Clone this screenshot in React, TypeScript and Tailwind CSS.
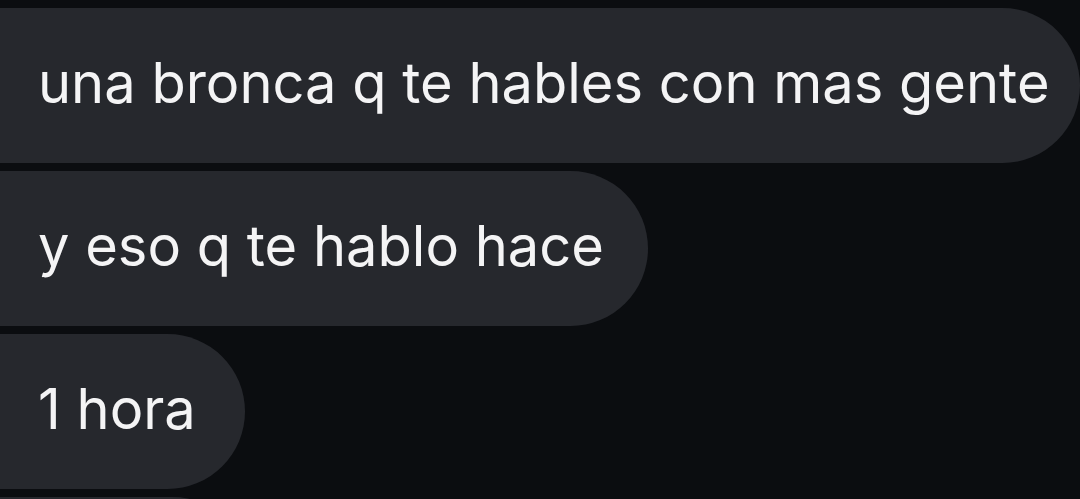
const messages = [
  { text: "una bronca q te hables con mas gente", width: "w-[1080px]", corners: "rounded-tl-[52px] rounded-bl-[8px] rounded-r-full" },
  { text: "y eso q te hablo hace", width: "w-[648px]", corners: "rounded-l-[8px] rounded-r-full" },
  { text: "1 hora", width: "w-[245px]", corners: "rounded-l-[8px] rounded-r-full" },
];

const App = () => {
  return (
    <div
      className="w-[1080px] h-[499px] overflow-hidden bg-[#0b0d10] flex flex-col gap-2 pt-2"
      style={{ fontFamily: "Inter, 'Noto Sans', sans-serif" }}
    >
      {messages.map((m) => (
        <div
          key={m.text}
          className={`${m.width} ${m.corners} shrink-0 h-[155px] bg-[#26282d] flex items-center pl-[38px] pb-[6px]`}
        >
          <span className="text-[56px] text-[#f4f4f5] whitespace-nowrap leading-none">{m.text}</span>
        </div>
      ))}
      {/* siguiente mensaje, cortado abajo */}
      <div className="w-[250px] h-[155px] shrink-0 rounded-l-[8px] rounded-r-full bg-[#26282d]" />
    </div>
  );
};

export default App;
